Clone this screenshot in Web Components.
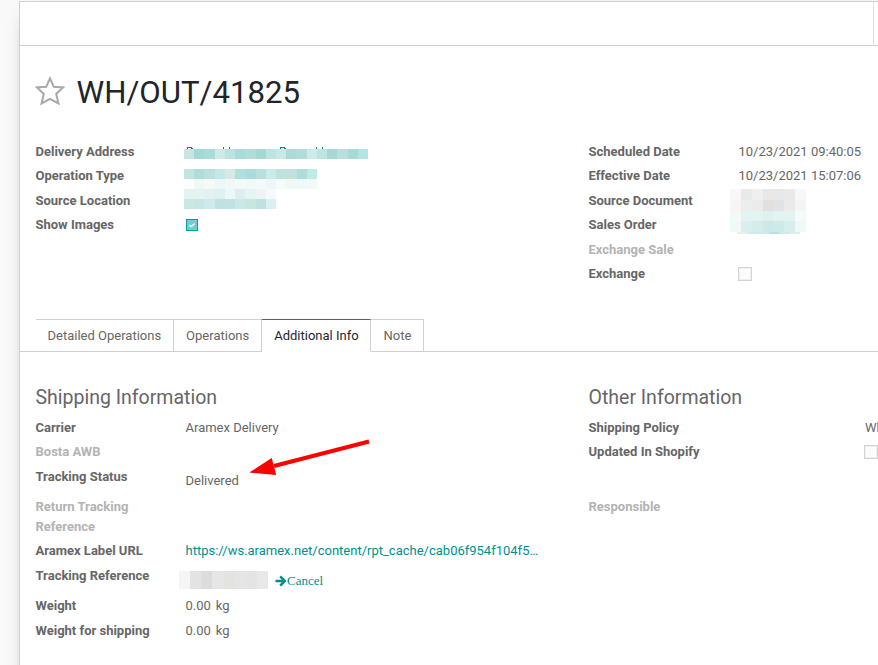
<!DOCTYPE html>
<html lang="en">
<head>
<meta charset="utf-8">
<title>WH/OUT/41825</title>
<style>
html, body { margin: 0; height: 665px; overflow: hidden; background: #f9f9f9; }
body { font: 13px/19.5px Roboto, "Open Sans", sans-serif; color: #666; }
</style>
</head>
<body>
<delivery-form></delivery-form>
<script>
const define = (name, html, setup) => {
  const t = document.createElement('template');
  t.innerHTML = html;
  customElements.define(name, class extends HTMLElement {
    connectedCallback() {
      if (this.shadowRoot) return;
      this.attachShadow({ mode: 'open' }).append(t.content.cloneNode(true));
      if (setup) setup(this, this.shadowRoot);
    }
  });
};

define('status-bar', `
<style>
:host { display: flex; box-sizing: border-box; height: 44px; border-bottom: 1px solid #ced0d5; }
.steps { width: 853px; border-right: 1px solid #dee0e4; }
</style><div class="steps"></div>`);

define('record-title', `
<style>
:host { display: flex; align-items: center; height: 48px; padding: 23px 0 0 15px; color: #212529; font-size: 31.2px; line-height: 48px; }
svg { width: 30px; height: 30px; margin: 0 11.5px 5px 0; flex: none; }
span { white-space: nowrap; }
</style>
<svg viewBox="0 0 28 28"><path d="M14 2.2 L17.5 10 L26.2 10.7 L19.8 16.7 L21.9 25.6 L14 21.4 L6.1 25.6 L8.2 16.7 L1.8 10.7 L10.5 10 Z" fill="none" stroke="#aaa9ac" stroke-width="1.9"/></svg>
<span><slot></slot></span>`);

define('field-row', `
<style>
:host { display: flex; height: var(--h, 24.5px); }
.label { width: 120px; padding-right: 30px; font-weight: 700; flex: none; line-height: var(--lh, 19.5px); }
:host([muted]) .label { color: #b3b3b3; }
:host([wide]) .label { width: 246.5px; }
.value { display: flex; align-items: flex-start; white-space: nowrap; padding-top: var(--drop, 0); }
</style>
<div class="label"></div><div class="value"><slot></slot></div>`,
(el, root) => root.querySelector('.label').textContent = el.getAttribute('label'));

define('field-group', `
<style>
:host { display: block; }
h2 { margin: 0; font-size: 19.5px; line-height: 32px; font-weight: 400; height: 35.75px; }
</style><slot></slot>`,
(el, root) => {
  if (!el.hasAttribute('heading')) return;
  const h = document.createElement('h2');
  h.textContent = el.getAttribute('heading');
  root.insertBefore(h, root.querySelector('slot'));
});

define('check-box', `
<style>
:host { display: block; box-sizing: border-box; width: 14px; height: 14px; margin: 3px 0 0 -0.7px; border: 1px solid #d3d3d3; box-shadow: inset 0 0 0 1px #f0f0f0; background: #fcfcfc; }
svg { display: none; }
:host([checked]) { width: 12px; height: 12px; border-color: #00a09d; background: #66d2cf; box-shadow: none; margin: 4px 0 0 0.5px; }
:host([checked]) svg { display: block; width: 10px; height: 10px; }
</style><svg viewBox="0 0 10 10"><path d="M2.2 5.1 L4.1 6.6 L7.7 3.6" fill="none" stroke="#e8eeee" stroke-width="1.6"/></svg>`);

define('tab-item', `
<style>
:host { display: block; box-sizing: border-box; height: 33px; padding: 6px 12px 0; border: 1px solid #ced0d5; border-left: 0; white-space: nowrap; }
:host([active]) { padding-right: 11.4px; color: #26252d; border-top-color: #7c4a6f; border-bottom-color: #fff; }
:host(:last-child) { padding-left: 12.6px; }
</style><slot></slot>`);

define('tab-bar', `
<style>
:host { display: flex; height: 33px; padding-left: 15.5px; box-sizing: border-box; box-shadow: inset 0 -1px #ced0d5; }
</style><slot></slot>`);

define('pixel-mosaic', `
<style>
:host { display: block; position: absolute; }
.r { display: flex; }
.r i { flex: 1; }
</style>`,
(el, root) => {
  const [x, y, w, h] = el.getAttribute('box').split(' ');
  Object.assign(el.style, { left: x + 'px', top: y + 'px', width: w + 'px' });
  for (const line of el.getAttribute('cells').split('/')) {
    const r = document.createElement('div');
    r.className = 'r';
    r.style.height = h + 'px';
    for (const c of line.trim().split(/\s+/)) {
      const i = document.createElement('i');
      i.style.background = '#' + c;
      r.append(i);
    }
    root.append(r);
  }
});

define('pointer-arrow', `
<style>
:host { display: block; position: absolute; left: 240px; top: 430px; width: 140px; height: 60px; }
svg { display: block; }
</style>
<svg width="140" height="60"><path d="M129 11.5 L34 36" stroke="#f00" stroke-width="4" fill="none"/><path d="M9.3 42.6 L31.7 28 L36.2 45 Z" fill="#f00"/></svg>`);

define('name-marks', `
<style>:host { display: block; position: absolute; left: 184px; top: 147px; width: 184px; height: 2px; } svg { display: block; }</style>
<svg width="184" height="2" fill="#008784"><path d="M3 0h5v1h-5z M3 1h1v1h-1z M7 1h2v1h-2z M39 0h1v2h-1z M45 0h1v2h-1z M96 0h5v1h-5z M96 1h1v1h-1z M100 1h2v1h-2z M132 0h1v2h-1z M138 0h1v2h-1z"/></svg>`);

define('delivery-form', `
<style>
:host { display: block; height: 665px; position: relative; overflow: hidden; }
.sheet { box-sizing: border-box; margin: 1px 0 0 19px; width: 900px; height: 700px; background: #fff; border: 1px solid #ced0d5; box-shadow: 0 5px 20px -15px #000; }
.cols { display: grid; grid-template-columns: 553px 1fr; padding-left: 15.5px; }
.top { height: 202px; padding-top: 24.75px; box-sizing: border-box; }
.info { padding-top: 30px; }
.link { color: #008f8c; }
.cancel { display: flex; align-items: center; margin-left: 89.5px; font-family: "Liberation Serif", serif; height: 20px; }
.cancel svg { width: 12px; height: 12px; }
.unit { margin-left: 5px; }
</style>
<div class="sheet">
  <status-bar></status-bar>
  <record-title>WH/OUT/41825</record-title>
  <div class="cols top">
    <field-group>
      <field-row label="Delivery Address"></field-row>
      <field-row label="Operation Type"></field-row>
      <field-row label="Source Location"></field-row>
      <field-row label="Show Images"><check-box checked></check-box></field-row>
    </field-group>
    <field-group>
      <field-row label="Scheduled Date">10/23/2021 09:40:05</field-row>
      <field-row label="Effective Date">10/23/2021 15:07:06</field-row>
      <field-row label="Source Document"></field-row>
      <field-row label="Sales Order"></field-row>
      <field-row label="Exchange Sale" muted></field-row>
      <field-row label="Exchange"><check-box></check-box></field-row>
    </field-group>
  </div>
  <tab-bar><tab-item>Detailed Operations</tab-item><tab-item>Operations</tab-item><tab-item active>Additional Info</tab-item><tab-item>Note</tab-item></tab-bar>
  <div class="cols info">
    <field-group heading="Shipping Information">
      <field-row label="Carrier">Aramex Delivery</field-row>
      <field-row label="Bosta AWB" muted></field-row>
      <field-row label="Tracking Status" style="--h:30px;--drop:4px">Delivered</field-row>
      <field-row label="Return Tracking Reference" muted style="--h:44.5px;--lh:20px"></field-row>
      <field-row label="Aramex Label URL"><span class="link">https://ws.aramex.net/content/rpt_cache/cab06f954f104f5…</span></field-row>
      <field-row label="Tracking Reference" style="--h:30px;--drop:5px"><span class="link cancel"><svg viewBox="0 0 12 12"><path d="M0.5 6H9.5M5.2 1.3L9.9 6L5.2 10.7" fill="none" stroke="#008f8c" stroke-width="2.5"/></svg><span>Cancel</span></span></field-row>
      <field-row label="Weight" style="--h:25px"><span>0.00</span><span class="unit">kg</span></field-row>
      <field-row label="Weight for shipping"><span>0.00</span><span class="unit">kg</span></field-row>
    </field-group>
    <field-group heading="Other Information">
      <field-row label="Shipping Policy" wide>Wh</field-row>
      <field-row label="Updated In Shopify" wide style="--h:54.5px"><check-box></check-box></field-row>
      <field-row label="Responsible" muted wide></field-row>
    </field-group>
  </div>
</div>
<name-marks></name-marks>
<pixel-mosaic box="184 149 184 10" cells="c7e6e3 a5d8d5 abdbd8 cdeae8 bde3e0 a8dcda b1dcd8 a3d8d5 bee4e2 c9e8e6 acdbd7 b1dcd9 cdebe8 bee4e2 a5d8d5 b6e0de a8dad5 b5e4e4"></pixel-mosaic>
<pixel-mosaic box="184 169 133 10" cells="c2e3e0 b0dcd7 b9e1df c5e7e5 d3ebe6 b2dedb abdcdd b8dfdb c9ebe9 c0e2df c1e1dc afdbdb c1e9e6 / fbfefd eef8f7 f5f9f8 ecf7f9 f1f9f8 f3fafa f2f9f9 f3faf9 edf7f9 f5fafb f0f9f8 f0f9f8 f1f9f9"></pixel-mosaic>
<pixel-mosaic box="184 189 92 10" cells="e3f3f2 e4f4f1 e2f2f3 dff0f0 eaf8f9 dceeed e6f3f3 edf4f3 f4fafd / cae7e2 c5e6e3 cfeaeb bfe2e0 bee3e2 c9e9e8 c6e6e0 c0e2df daf0f2"></pixel-mosaic>
<pixel-mosaic box="730 189 76 10.8" cells="f9f8f7 e6eae9 edf0ef e8e8e8 e8e8e9 e9e9e9 f7f7f7 / f7f4f6 ededed ebebeb e2e0df e1e2e5 eaeaea f5f4f5 / f2f9f9 e2f3f1 e4f3f2 dff1ef e2f3f2 e3f3f2 f3faf9 / f1f9f8 d9efed d5eceb cbe9ea ceeae8 d8eeec eef8f6"></pixel-mosaic>
<pixel-mosaic box="737 232 63 2" cells="dff0ed d3ebe8 ceeae8 b9e0e0 cfe9e6 d8eeec"></pixel-mosaic>
<pixel-mosaic box="179 571 89 18" cells="f6f5f4 e1e3e5 dcdcdc e4e7e6 e4e3e0 e5e5e7 e6e3e4 e8e9eb"></pixel-mosaic>
<pointer-arrow></pointer-arrow>`);
</script>
</body>
</html>
